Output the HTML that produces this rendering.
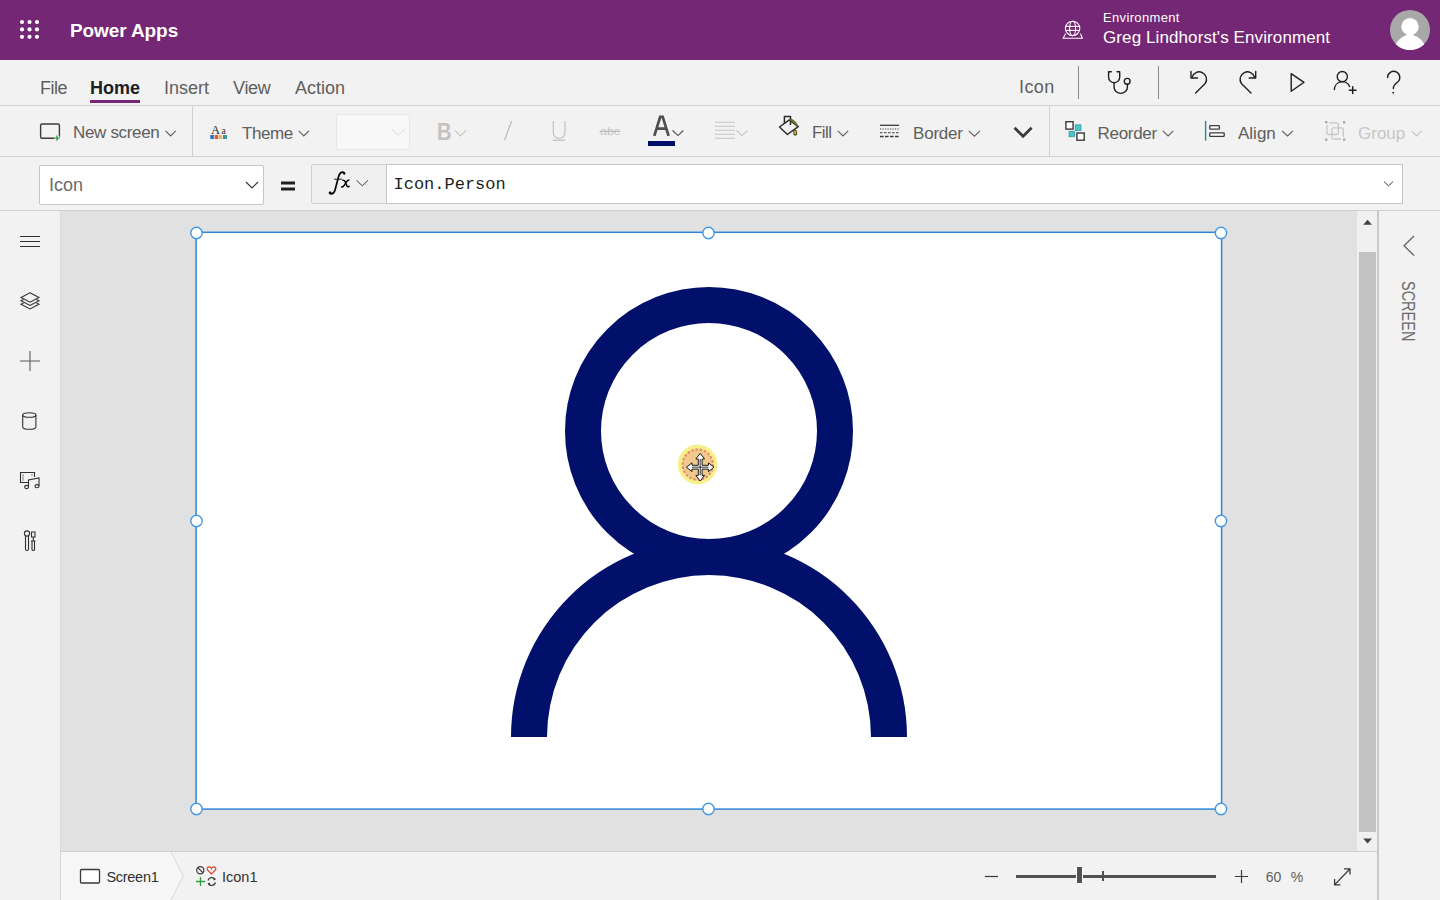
<!DOCTYPE html>
<html><head><meta charset="utf-8">
<style>
*{margin:0;padding:0;box-sizing:border-box}
html,body{width:1440px;height:900px;overflow:hidden}
body{background:#f2f2f2;font-family:"Liberation Sans",sans-serif;position:relative;color:#323130}
.a{position:absolute}
.t{position:absolute;white-space:nowrap;line-height:1}
.g{color:#605e5c}
#hdr{left:0;top:0;width:1440px;height:60px;background:#742774}
#tabs{left:0;top:60px;width:1440px;height:46px;background:#f2f2f2;border-bottom:1px solid #d2d0ce}
#tool{left:0;top:106px;width:1440px;height:51px;background:#f2f2f2;border-bottom:1px solid #d2d0ce}
#fbar{left:0;top:157px;width:1440px;height:54px;background:#f2f2f2;border-bottom:1px solid #d2d0ce}
#rail{left:0;top:211px;width:61px;height:689px;background:#f2f2f2;border-right:1px solid #d8d8d8}
#canvas{left:61px;top:211px;width:1296px;height:640px;background:#e1e1e1}
#sbar{left:61px;top:851px;width:1316px;height:49px;background:#f2f2f2;border-top:1px solid #d2d0ce}
#scroll{left:1357px;top:211px;width:20px;height:640px;background:#f0f0f0}
#rpanel{left:1377px;top:211px;width:63px;height:689px;background:#f2f2f2;border-left:2px solid #c8c8c8}
svg{position:absolute;overflow:visible}
</style></head><body>
<div id="hdr" class="a"></div>
<div id="tabs" class="a"></div>
<div id="tool" class="a"></div>
<div id="fbar" class="a"></div>
<div id="rail" class="a"></div>
<div id="canvas" class="a"></div>
<div id="scroll" class="a"></div>
<div id="rpanel" class="a"></div>
<div id="sbar" class="a"></div>

<!-- ============ HEADER ============ -->
<svg style="left:0;top:0" width="60" height="60">
 <g fill="#fff">
  <circle cx="22" cy="22" r="2.1"/><circle cx="29.5" cy="22" r="2.1"/><circle cx="37" cy="22" r="2.1"/>
  <circle cx="22" cy="29.4" r="2.1"/><circle cx="29.5" cy="29.4" r="2.1"/><circle cx="37" cy="29.4" r="2.1"/>
  <circle cx="22" cy="36.8" r="2.1"/><circle cx="29.5" cy="36.8" r="2.1"/><circle cx="37" cy="36.8" r="2.1"/>
 </g>
</svg>
<div class="t" style="left:70px;top:21.2px;font-size:19px;font-weight:bold;letter-spacing:-0.1px;color:#fff">Power Apps</div>
<svg style="left:0;top:0" width="1440" height="60">
 <g fill="none" stroke="#fff" stroke-width="1.1">
  <circle cx="1072.6" cy="28.4" r="7.2"/>
  <ellipse cx="1072.6" cy="28.4" rx="3" ry="7.2"/>
  <line x1="1065.6" y1="26.4" x2="1079.6" y2="26.4"/>
  <line x1="1065.6" y1="30.4" x2="1079.6" y2="30.4"/>
  <path d="M1065.5 33.6 L1063.3 38.3 L1082.3 38.3 L1080.5 33.6"/>
 </g>
</svg>
<div class="t" style="left:1103px;top:10.5px;font-size:13px;letter-spacing:0.35px;color:#fff">Environment</div>
<div class="t" style="left:1103px;top:28.9px;font-size:17px;letter-spacing:0.1px;color:#fff">Greg Lindhorst's Environment</div>
<svg style="left:0;top:0" width="1440" height="60">
 <defs><clipPath id="av"><circle cx="1410" cy="30" r="20"/></clipPath></defs>
 <circle cx="1410" cy="30" r="20" fill="#a8a8a8"/>
 <g clip-path="url(#av)" fill="#fff">
  <circle cx="1410" cy="26.7" r="8.7"/>
  <ellipse cx="1410" cy="52.6" rx="16" ry="17.8"/>
 </g>
</svg>

<!-- ============ TABS ============ -->
<div class="t g" style="left:40px;top:78.6px;font-size:18px;letter-spacing:-0.5px">File</div>
<div class="t" style="left:90px;top:78.6px;font-size:18px;font-weight:bold;color:#201f1e">Home</div>
<div class="a" style="left:90px;top:100px;width:50px;height:3px;background:#742774"></div>
<div class="t g" style="left:164px;top:78.6px;font-size:18px">Insert</div>
<div class="t g" style="left:233px;top:78.6px;font-size:18px;letter-spacing:-0.3px">View</div>
<div class="t g" style="left:295px;top:78.6px;font-size:18px">Action</div>
<div class="t g" style="left:1019px;top:77.5px;font-size:18px;letter-spacing:0.4px">Icon</div>
<div class="a" style="left:1078px;top:66px;width:1px;height:33px;background:#8a8886"></div>
<div class="a" style="left:1158px;top:66px;width:1px;height:33px;background:#8a8886"></div>
<svg style="left:0;top:0" width="1440" height="106">
 <g fill="none" stroke="#201f1e" stroke-width="1.4" stroke-linecap="round" stroke-linejoin="round">
  <!-- stethoscope -->
  <path d="M1111.3 71.8 H1108.6 V77.2 A5.55 5.55 0 0 0 1119.7 77.2 V71.8 H1117"/>
  <path d="M1114.1 82.8 V87.2 A6.65 6.2 0 0 0 1127.4 87.2 V84.3"/>
  <circle cx="1127.2" cy="81.3" r="2.9"/>
  <!-- undo -->
  <path d="M1191 71.5 V78 H1197.5"/>
  <path d="M1192 77.3 A7.4 7.4 0 1 1 1205.2 83.5 L1195.6 92.9"/>
  <!-- redo -->
  <path d="M1255.7 71.5 V78 H1249.2"/>
  <path d="M1254.6 77.3 A7.4 7.4 0 1 0 1241.4 83.5 L1251 92.9"/>
  <!-- play -->
  <path d="M1291.2 73.6 L1304 82.3 L1291.2 91.3 Z"/>
  <!-- add person -->
  <circle cx="1342.3" cy="76.6" r="5.1"/>
  <path d="M1334.4 89.6 A7.9 7.9 0 0 1 1349.6 86.6"/>
  <path d="M1352.7 86.8 V93.5 M1349.4 90.2 H1356" stroke-width="1.5"/>
  <!-- help -->
  <path d="M1387.6 77.6 A6.1 6.1 0 1 1 1397.4 82.3 Q1393.3 85.3 1393.3 88.5"/>
 </g>
 <circle cx="1393.2" cy="92.8" r="0.95" fill="#323130"/>
</svg>

<!-- ============ TOOLBAR ============ -->
<div class="a" style="left:192px;top:106px;width:1px;height:50px;background:#d2d0ce"></div>
<div class="a" style="left:1049px;top:106px;width:1px;height:50px;background:#d2d0ce"></div>
<div class="t g" style="left:73px;top:124px;font-size:17px;letter-spacing:-0.33px">New screen</div>
<div class="t g" style="left:242px;top:124.5px;font-size:17px;letter-spacing:-0.4px">Theme</div>
<div class="a" style="left:335.5px;top:113.5px;width:74px;height:36px;background:#f8f8f8;border:1px solid #e6e6e6;border-radius:2px"></div>
<div class="t g" style="left:812px;top:124.2px;font-size:17px;letter-spacing:-0.6px">Fill</div>
<div class="t g" style="left:913px;top:124.5px;font-size:17px;letter-spacing:-0.2px">Border</div>
<div class="t g" style="left:1097.5px;top:124.5px;font-size:17px;letter-spacing:-0.3px">Reorder</div>
<div class="t g" style="left:1238px;top:124.5px;font-size:17px">Align</div>
<div class="t" style="left:1358px;top:124.5px;font-size:17px;color:#c8c6c4">Group</div>
<div class="t" style="left:436.5px;top:119.7px;font-size:24px;font-weight:bold;color:#c2c2c2;transform-origin:0 0;transform:scaleX(0.84)">B</div>
<div class="a" style="left:648px;top:141px;width:27px;height:4.8px;background:#000e6b"></div>
<svg style="left:0;top:0" width="1440" height="160">
 <!-- new screen icon -->
 <rect x="40.6" y="124" width="18.8" height="14.2" rx="1.5" fill="none" stroke="#3b3a39" stroke-width="1.4"/>
 <path d="M57 135.3 V141 M54.2 138.2 H59.8" stroke="#f2f2f2" stroke-width="3.4"/>
 <path d="M57 135.5 V140.8 M54.4 138.2 H59.6" stroke="#2a9d3e" stroke-width="1.3"/>
 <!-- chevrons -->
 <g fill="none" stroke="#605e5c" stroke-width="1.1">
  <path d="M165.5 130.8 L170.6 135.9 L175.7 130.8"/>
  <path d="M298.7 130.8 L303.8 135.9 L308.9 130.8"/>
  <path d="M837.8 130.8 L843 135.9 L848.2 130.8"/>
  <path d="M968.8 130.8 L974.4 136.2 L980 130.8"/>
  <path d="M1162.9 130.8 L1168.1 135.9 L1173.3 130.8"/>
  <path d="M1282 130.8 L1287.5 135.9 L1293 130.8"/>
  <path d="M672.6 130.5 L678 135.6 L683.3 130.5" stroke="#505050"/>
 </g>
 <g fill="none" stroke="#c4c4c4" stroke-width="1.1">
  <path d="M391.6 129 L398.3 135 L405 129" stroke="#e4e4e4"/>
  <path d="M454.8 130.3 L460.4 135.9 L466 130.3"/>
  <path d="M736.5 130.5 L742 135.6 L747.5 130.5"/>
  <path d="M1411.7 130.8 L1416.7 135.9 L1421.7 130.8"/>
  <!-- italic -->
  <path d="M511.6 121.2 L504.4 140.4" stroke="#b8b8b8" stroke-width="1.2"/>
  <!-- underline -->
  <path d="M553.3 121 V132.4 A5.85 5.85 0 0 0 565 132.4 V121" stroke="#bcbcbc"/>
  <path d="M552.8 140.2 H565" stroke="#bcbcbc" stroke-width="1.2"/>
  <!-- align lines -->
  <path d="M715 122.3 H735 M715 126.3 H735 M715 130.3 H735 M715 134.3 H735 M715 138.3 H735"/>
 </g>
 <text x="600" y="135" font-family="Liberation Sans" font-size="11.5" fill="#c4c4c4" textLength="20" lengthAdjust="spacingAndGlyphs">abc</text>
 <path d="M599.5 131.4 H620.5" stroke="#b8b8b8" stroke-width="1.1"/>
 <!-- font color A -->
 <path d="M654.3 135.8 L660.2 116.8 L662.7 116.8 L668.6 135.8 M656.7 128.6 H666.2" fill="none" stroke="#4e4e4e" stroke-width="2.7"/>
 <!-- theme icon -->
 <text x="211" y="133.7" font-family="Liberation Serif" font-size="12.5" fill="#2b2b2b">A</text>
 <text x="221.5" y="133.7" font-family="Liberation Serif" font-size="9.5" fill="#2b2b2b">a</text>
 <rect x="210.3" y="135" width="3.6" height="4" fill="#2f6fd0"/>
 <rect x="214.7" y="135" width="3.4" height="4" fill="#e35a35"/>
 <rect x="218.8" y="135" width="3.4" height="4" fill="#efb060"/>
 <rect x="223" y="135" width="4" height="4" fill="#3d9a9a"/>
 <!-- fill icon -->
 <g fill="none" stroke="#2b2b2b" stroke-width="1.5" stroke-linejoin="round">
  <path d="M789.3 119.9 L798.2 126.7 L787.4 134.5 L779.5 127 Z"/>
  <path d="M784.4 123 V116.5 H790.5 V125"/>
 </g>
 <path d="M789.3 119.9 L791.5 118.5 Q796.5 121.5 798.6 126.5 L798.2 126.7 Z" fill="#6b6a2a"/>
 <rect x="793.3" y="130" width="3.8" height="5.6" rx="1.6" fill="#4b4a22"/>
 <rect x="794.2" y="131" width="2" height="3" fill="#d4b040"/>
 <!-- border icon -->
 <g stroke="#3b3a39" stroke-width="1.3">
  <path d="M880 125.3 H899"/>
  <path d="M880 129 H899" stroke-dasharray="1.2 1.3" stroke-width="1.1"/>
  <path d="M880 132.8 H899" stroke-dasharray="2.6 1.4" stroke-width="1.1"/>
  <path d="M880 136.5 H899" stroke-dasharray="3.6 1.4"/>
 </g>
 <!-- big chevron -->
 <path d="M1014.6 127.8 L1023.1 136.3 L1031.6 127.8" fill="none" stroke="#3b3a39" stroke-width="2.8"/>
 <!-- reorder icon -->
 <rect x="1075.2" y="124.8" width="5.8" height="5.9" fill="#4ac6c6" stroke="#1f8a9a" stroke-width="0.6"/>
 <rect x="1069" y="131.2" width="5.7" height="5.6" fill="#4ac6c6" stroke="#1f8a9a" stroke-width="0.6"/>
 <rect x="1065.9" y="121.7" width="7.2" height="7.4" fill="#fff" stroke="#3b3a39" stroke-width="1.4"/>
 <rect x="1076.9" y="133" width="7.3" height="7.2" fill="#fff" stroke="#3b3a39" stroke-width="1.4"/>
 <!-- align icon -->
 <path d="M1205.6 121 V140.7" stroke="#1f8a9a" stroke-width="1.4"/>
 <rect x="1209.8" y="125.6" width="9.6" height="3.6" rx="0.6" fill="#fff" stroke="#3b3a39" stroke-width="1.3"/>
 <rect x="1209.8" y="132.8" width="14.4" height="3.6" rx="0.6" fill="#fff" stroke="#3b3a39" stroke-width="1.3"/>
 <!-- group icon -->
 <g fill="#aaaaaa">
  <rect x="1325" y="121" width="2.4" height="2.4"/><rect x="1343" y="121" width="2.4" height="2.4"/>
  <rect x="1325" y="138.5" width="2.4" height="2.4"/><rect x="1343" y="138.5" width="2.4" height="2.4"/>
 </g>
 <g fill="none" stroke="#c8c8c8" stroke-width="1.3">
  <path d="M1329 122.9 H1336.5 Q1338.4 122.9 1338.4 124.8 V132.6 Q1338.4 134.5 1336.5 134.5 H1328.8 Q1326.9 134.5 1326.9 132.6 V125"/>
  <path d="M1331.8 129.5 Q1331.8 127.8 1333.6 127.8 H1341.4 Q1343.3 127.8 1343.3 129.6 V137"/>
  <path d="M1331.8 129.5 V137.3 Q1331.8 139 1333.6 139 H1341"/>
 </g>
</svg>

<!-- ============ FORMULA BAR ============ -->
<div class="a" style="left:39px;top:165px;width:225px;height:40px;background:#fff;border:1px solid #c8c6c4;border-radius:2px"></div>
<div class="t" style="left:49px;top:175.8px;font-size:18px;color:#6b6a69">Icon</div>
<div class="a" style="left:311px;top:164px;width:76px;height:40px;background:#f0f0f0;border:1px solid #d2d0ce;border-radius:2px 0 0 2px"></div>
<div class="a" style="left:386px;top:164px;width:1017px;height:40px;background:#fff;border:1px solid #c8c6c4"></div>
<div class="t" style="left:393.5px;top:176.2px;font-size:17px;font-family:'Liberation Mono',monospace;color:#201f1e">Icon.Person</div>

<svg style="left:0;top:0" width="1440" height="220">
 <g fill="none" stroke="#3b3a39" stroke-width="1.2">
  <path d="M246 182 L252 188 L258 182"/>
  <path d="M356.6 180.4 L362.3 185.8 L368 180.4" stroke-width="1"/>
  <path d="M1384 181.6 L1388.5 185.9 L1393 181.6" stroke-width="1"/>
 </g>
 <path d="M344.6 173.6 Q344 171.6 341.6 172.4 Q339.2 173.4 338.2 178 L335 190.2 Q333.8 193.8 331.2 193.8 Q329.4 193.8 329.6 192.6" fill="none" stroke="#000" stroke-width="1.7" stroke-linecap="round"/>
 <circle cx="344" cy="173.4" r="1.1" fill="#000"/><circle cx="330.2" cy="192.8" r="1.3" fill="#000"/>
 <path d="M334.3 179.2 H341.8" stroke="#222" stroke-width="1.1"/>
 <path d="M342.2 180.4 Q344.6 179.6 345.6 182.6 L346.8 185.6 Q347.8 187.4 349.6 186.2" fill="none" stroke="#000" stroke-width="1.5"/>
 <path d="M349.4 179.9 Q347.6 179.8 346.2 182.2 L344.2 185.4 Q342.8 187.6 341 186.6" fill="none" stroke="#000" stroke-width="1.5"/>
 <rect x="281" y="181.5" width="14" height="3" fill="#201f1e"/>
 <rect x="281" y="187.5" width="14" height="3" fill="#201f1e"/>
</svg>

<!-- ============ LEFT RAIL ============ -->
<svg style="left:0;top:0" width="61" height="600">
 <g fill="none" stroke="#323130" stroke-width="1.1">
  <path d="M20 236.5 H40 M20 241.5 H40 M20 246.5 H40"/>
  <path d="M30 292.8 L39 297.5 L30 302.2 L21 297.5 Z"/>
  <path d="M23.5 299.5 L21 300.8 L30 305.5 L39 300.8 L36.5 299.5"/>
  <path d="M23.5 303 L21 304.3 L30 309 L39 304.3 L36.5 303"/>
  <path d="M20 361 H40 M30 351 V371" stroke="#5a5958"/>
  <ellipse cx="29.3" cy="415" rx="6.6" ry="2.3"/>
  <path d="M22.7 415 V427 A6.6 2.3 0 0 0 35.9 427 V415"/>
  <!-- media -->
  <path d="M29 482.5 H20.5 V472.5 H34.5 V477"/>
  <path d="M23 474.5 V481 M32 474.5 V476" stroke-dasharray="1 1"/>
  <path d="M28.5 486.5 V480 L39 478 V486"/>
  <ellipse cx="26.6" cy="487" rx="2" ry="1.6"/>
  <ellipse cx="37" cy="486.2" rx="2" ry="1.6"/>
  <!-- tools -->
  <path d="M25.5 536 V549 Q25.5 550.5 27 550.5 Q28.5 550.5 28.5 549 V536"/>
  <circle cx="27" cy="533.5" r="2.6"/>
  <path d="M31.5 532 H35 V537 H31.5 Z M33.3 537 V541 M31 541 H35.5 M32 541 V549.5 Q32 550.5 33.3 550.5 Q34.5 550.5 34.5 549.5 V541"/>
 </g>
</svg>

<!-- ============ CANVAS ============ -->
<div class="a" style="left:196px;top:232px;width:1026px;height:577px;background:#fff"></div>
<svg style="left:0;top:0" width="1440" height="900">
 <circle cx="709" cy="431" r="126" fill="none" stroke="#00106b" stroke-width="36"/>
 <path d="M511 737 A198 198 0 0 1 907 737 L871 737 A162 162 0 0 0 547 737 Z" fill="#00106b"/>
 <rect x="196.1" y="232.3" width="1025.5" height="576.8" fill="none" stroke="#2f86d6" stroke-width="1.5"/>
 <g fill="#fff" stroke="#4497e0" stroke-width="1.4">
  <circle cx="196.5" cy="233" r="5.7"/><circle cx="708.5" cy="233" r="5.7"/><circle cx="1221" cy="233" r="5.7"/>
  <circle cx="196.5" cy="521" r="5.7"/><circle cx="1221" cy="521" r="5.7"/>
  <circle cx="196.5" cy="809" r="5.7"/><circle cx="708.5" cy="809" r="5.7"/><circle cx="1221" cy="809" r="5.7"/>
 </g>
 <!-- move cursor -->
 <circle cx="697.6" cy="464.4" r="19.8" fill="#f7ef8a"/>
 <circle cx="697.8" cy="464.6" r="15.2" fill="#f2c98c" stroke="#e9826e" stroke-width="2" stroke-dasharray="2.5 1.8"/>
 <path d="M700.2 453.4 L704.6 459.0 L702.1 459.0 L702.1 465.3 L708.4 465.3 L708.4 462.8 L714.0 467.2 L708.4 471.6 L708.4 469.1 L702.1 469.1 L702.1 475.4 L704.6 475.4 L700.2 481.0 L695.8 475.4 L698.3 475.4 L698.3 469.1 L692.0 469.1 L692.0 471.6 L686.4 467.2 L692.0 462.8 L692.0 465.3 L698.3 465.3 L698.3 459.0 L695.8 459.0 Z" fill="#fff" stroke="#1a1a1a" stroke-width="1"/>
 <path d="M700.2 459.0 V475.4 M692.0000000000001 467.2 H708.4" stroke="#1a1a1a" stroke-width="0.9"/>
</svg>

<!-- ============ SCROLL + RIGHT PANEL ============ -->
<div class="a" style="left:1359px;top:252px;width:17px;height:580px;background:#c2c2c2"></div>
<svg style="left:0;top:0" width="1440" height="900">
 <path d="M1363.2 224.8 L1367.6 219.8 L1372 224.8 Z" fill="#444"/>
 <path d="M1363.2 838.5 L1367.6 843.5 L1372 838.5 Z" fill="#444"/>
 <path d="M1414 236 L1404 245.7 L1414 255.5" fill="none" stroke="#605e5c" stroke-width="1.2"/>
</svg>
<div class="t" style="left:1417.6px;top:281.2px;font-size:19px;color:#6a6a6a;transform-origin:0 0;transform:rotate(90deg) scaleX(0.762)">SCREEN</div>

<!-- ============ STATUS BAR ============ -->
<svg style="left:0;top:0" width="1440" height="900">
 <path d="M61 852 H171 L183.3 876 L171 900 H61 Z" fill="#f6f6f6"/>
 <path d="M171 852 L183.3 876 L171 900" fill="none" stroke="#d6d6d6" stroke-width="1"/>
 <rect x="80.5" y="869.5" width="19" height="13.5" rx="1" fill="#fff" stroke="#3b3a39" stroke-width="1.3"/>
 <circle cx="200.3" cy="870.2" r="3.6" fill="none" stroke="#3b3a39" stroke-width="1.2"/>
 <path d="M197.8 867.7 L202.8 872.7" stroke="#3b3a39" stroke-width="1.2"/>
 <path d="M211.5 874 L207.5 870 Q206.5 867 209.2 866.9 Q210.8 867 211.5 868.5 Q212.2 867 213.8 866.9 Q216.5 867 215.5 870 Z" fill="none" stroke="#e0442c" stroke-width="1.2"/>
 <path d="M200.5 877 V886 M196 881.5 H205" stroke="#2e9e3e" stroke-width="1.3"/>
 <path d="M208 880.5 A4 3.8 0 0 1 215 879 M215.5 882.5 A4 3.8 0 0 1 208.5 884" fill="none" stroke="#3b3a39" stroke-width="1.3"/>
 <path d="M213.5 877.5 L216 879.5 L213.5 880.5 Z M210 882.5 L207.5 883.5 L210 885.5 Z" fill="#3b3a39"/>
 <!-- zoom -->
 <path d="M985 876.5 H998" stroke="#3b3a39" stroke-width="1.2"/>
 <rect x="1016" y="875" width="200" height="3" fill="#505050"/>
 <rect x="1076.5" y="866.5" width="6" height="17" fill="#505050" stroke="#fff" stroke-width="1"/>
 <rect x="1102" y="871" width="2" height="10" fill="#505050"/>
 <path d="M1235 876.5 H1248 M1241.5 870 V883" stroke="#3b3a39" stroke-width="1.2"/>
 <path d="M1334.8 884.6 L1349.8 869 M1344 868.8 H1350 V874.6 M1334.6 879 V884.8 H1340.4" fill="none" stroke="#3b3a39" stroke-width="1.3"/>
</svg>
<div class="t" style="left:106.5px;top:869.7px;font-size:14.5px;letter-spacing:-0.3px;color:#323130">Screen1</div>
<div class="t" style="left:222px;top:869.7px;font-size:14.5px;color:#323130">Icon1</div>
<div class="t" style="left:1265.8px;top:870px;font-size:14px;color:#605e5c">60</div>
<div class="t" style="left:1290.8px;top:870px;font-size:14px;color:#605e5c">%</div>
</body></html>
